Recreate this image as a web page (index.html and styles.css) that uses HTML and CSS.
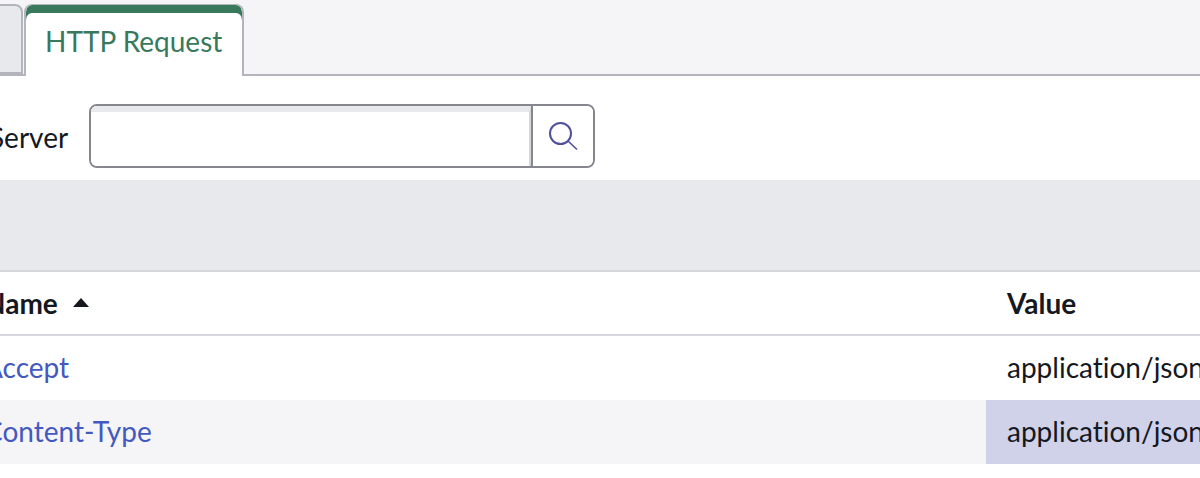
FILE: index.html

```html
<!DOCTYPE html>
<html lang="en">
<head>
  <meta charset="utf-8">
  <meta name="viewport" content="width=device-width, initial-scale=1">
  <title>HTTP Request</title>

  <link rel="stylesheet" href="styles.css">
</head>
<body>

  <div class="tabBar">
    <div class="tab"></div>
    <div class="tab tabActive">HTTP Request</div>
  </div>

  <div class="formRow">
    <label class="formLabel">Server</label>
    <div class="lookup">
      <input class="lookupInput" type="text">
      <button class="lookupButton" type="button">
        <svg width="32" height="32" viewBox="0 0 32 32" fill="none" stroke="#4f4f9e" stroke-width="2">
          <circle cx="13.5" cy="13.5" r="10.5"/>
          <path d="M21 21L30 29.5" stroke-width="1.6"/>
        </svg>
      </button>
    </div>
  </div>

  <div class="band"></div>

  <div class="tableRow tableHead">
    <div class="cellName">Name <span class="sortArrow"></span></div>
    <div class="cellValue">Value</div>
  </div>
  <div class="tableRow">
    <div class="cellName"><a class="link">Accept</a></div>
    <div class="cellValue">application/json</div>
  </div>
  <div class="tableRow rowAlt">
    <div class="cellName"><a class="link">Content-Type</a></div>
    <div class="cellValue cellSelected">application/json</div>
  </div>

</body>
</html>
```

FILE: styles.css

```css
html, body {
  margin: 0;
  height: 100%;
  overflow: hidden;
}

body {
  background: #fff;
  color: #16181f;
  font-family: Lato, "Noto Sans", sans-serif;
  font-size: 28px;
  font-variant-ligatures: none;
}

.tabBar {
  display: flex;
  align-items: flex-end;
  height: 76px;
  box-sizing: border-box;
  padding-top: 4px;
  background: #f5f5f8;
  border-bottom: 2px solid #b4b5bc;
}

.tab {
  box-sizing: border-box;
  width: 60px;
  height: 70px;
  margin-left: -37px;
  background: #e8e9ed;
  border: 2px solid #b4b5bc;
  border-radius: 8px 8px 0 0;
}

.tabActive {
  width: 220px;
  height: 72px;
  margin: 0 0 -2px 1px;
  padding: 11px 0 0 19px;
  background: #fff;
  border-top: 1px solid #b4b5bc;
  border-bottom: 0;
  box-shadow: inset 0 8px 0 #38795c;
  color: #38795c;
  line-height: 50px;
}

.formRow {
  display: flex;
  align-items: center;
  height: 104px;
  box-sizing: border-box;
  padding-top: 16px;
  margin-left: -11px;
}

.formLabel {
  width: 100px;
  padding-top: 2px;
}

.lookup {
  display: flex;
  box-sizing: border-box;
  width: 506px;
  height: 64px;
  border: 2px solid #85868e;
  border-radius: 8px;
  overflow: hidden;
}

.lookupInput {
  flex: 1;
  min-width: 0;
  margin: 0;
  padding: 0;
  background: #fff;
  border: 0;
  border-top: 6px solid #e8e9ed;
  border-right: 2px solid #d5d5dc;
  outline: 0;
}

.lookupButton {
  display: flex;
  align-items: center;
  justify-content: center;
  width: 62px;
  padding: 0;
  background: #fff;
  border: 0;
  border-left: 2px solid #85868e;
}

.band {
  height: 92px;
  box-sizing: border-box;
  background: #e8e9ed;
  border-bottom: 2px solid #d5d5dc;
}

.tableRow {
  display: flex;
  align-items: center;
  height: 64px;
}

.tableHead {
  box-sizing: border-box;
  border-bottom: 2px solid #d5d5dc;
  font-weight: 700;
}

.rowAlt {
  background: #f5f5f8;
}

.cellName {
  flex: none;
  display: flex;
  align-items: center;
  gap: 15px;
  width: 1023px;
  margin-left: -37px;
  padding: 0 0 2px 21px;
  box-sizing: border-box;
}

.cellValue {
  flex: 1;
  min-width: 0;
  align-self: stretch;
  display: flex;
  align-items: center;
  padding: 0 0 2px 21px;
  white-space: nowrap;
}

.tableHead .cellName, .tableHead .cellValue {
  padding-bottom: 0;
}

.cellSelected {
  background: #d0d2ea;
}

.link {
  color: #4459c0;
}

.sortArrow {
  width: 0;
  height: 0;
  margin-top: -2px;
  border-left: 8px solid transparent;
  border-right: 8px solid transparent;
  border-bottom: 9px solid #16181f;
}
```
